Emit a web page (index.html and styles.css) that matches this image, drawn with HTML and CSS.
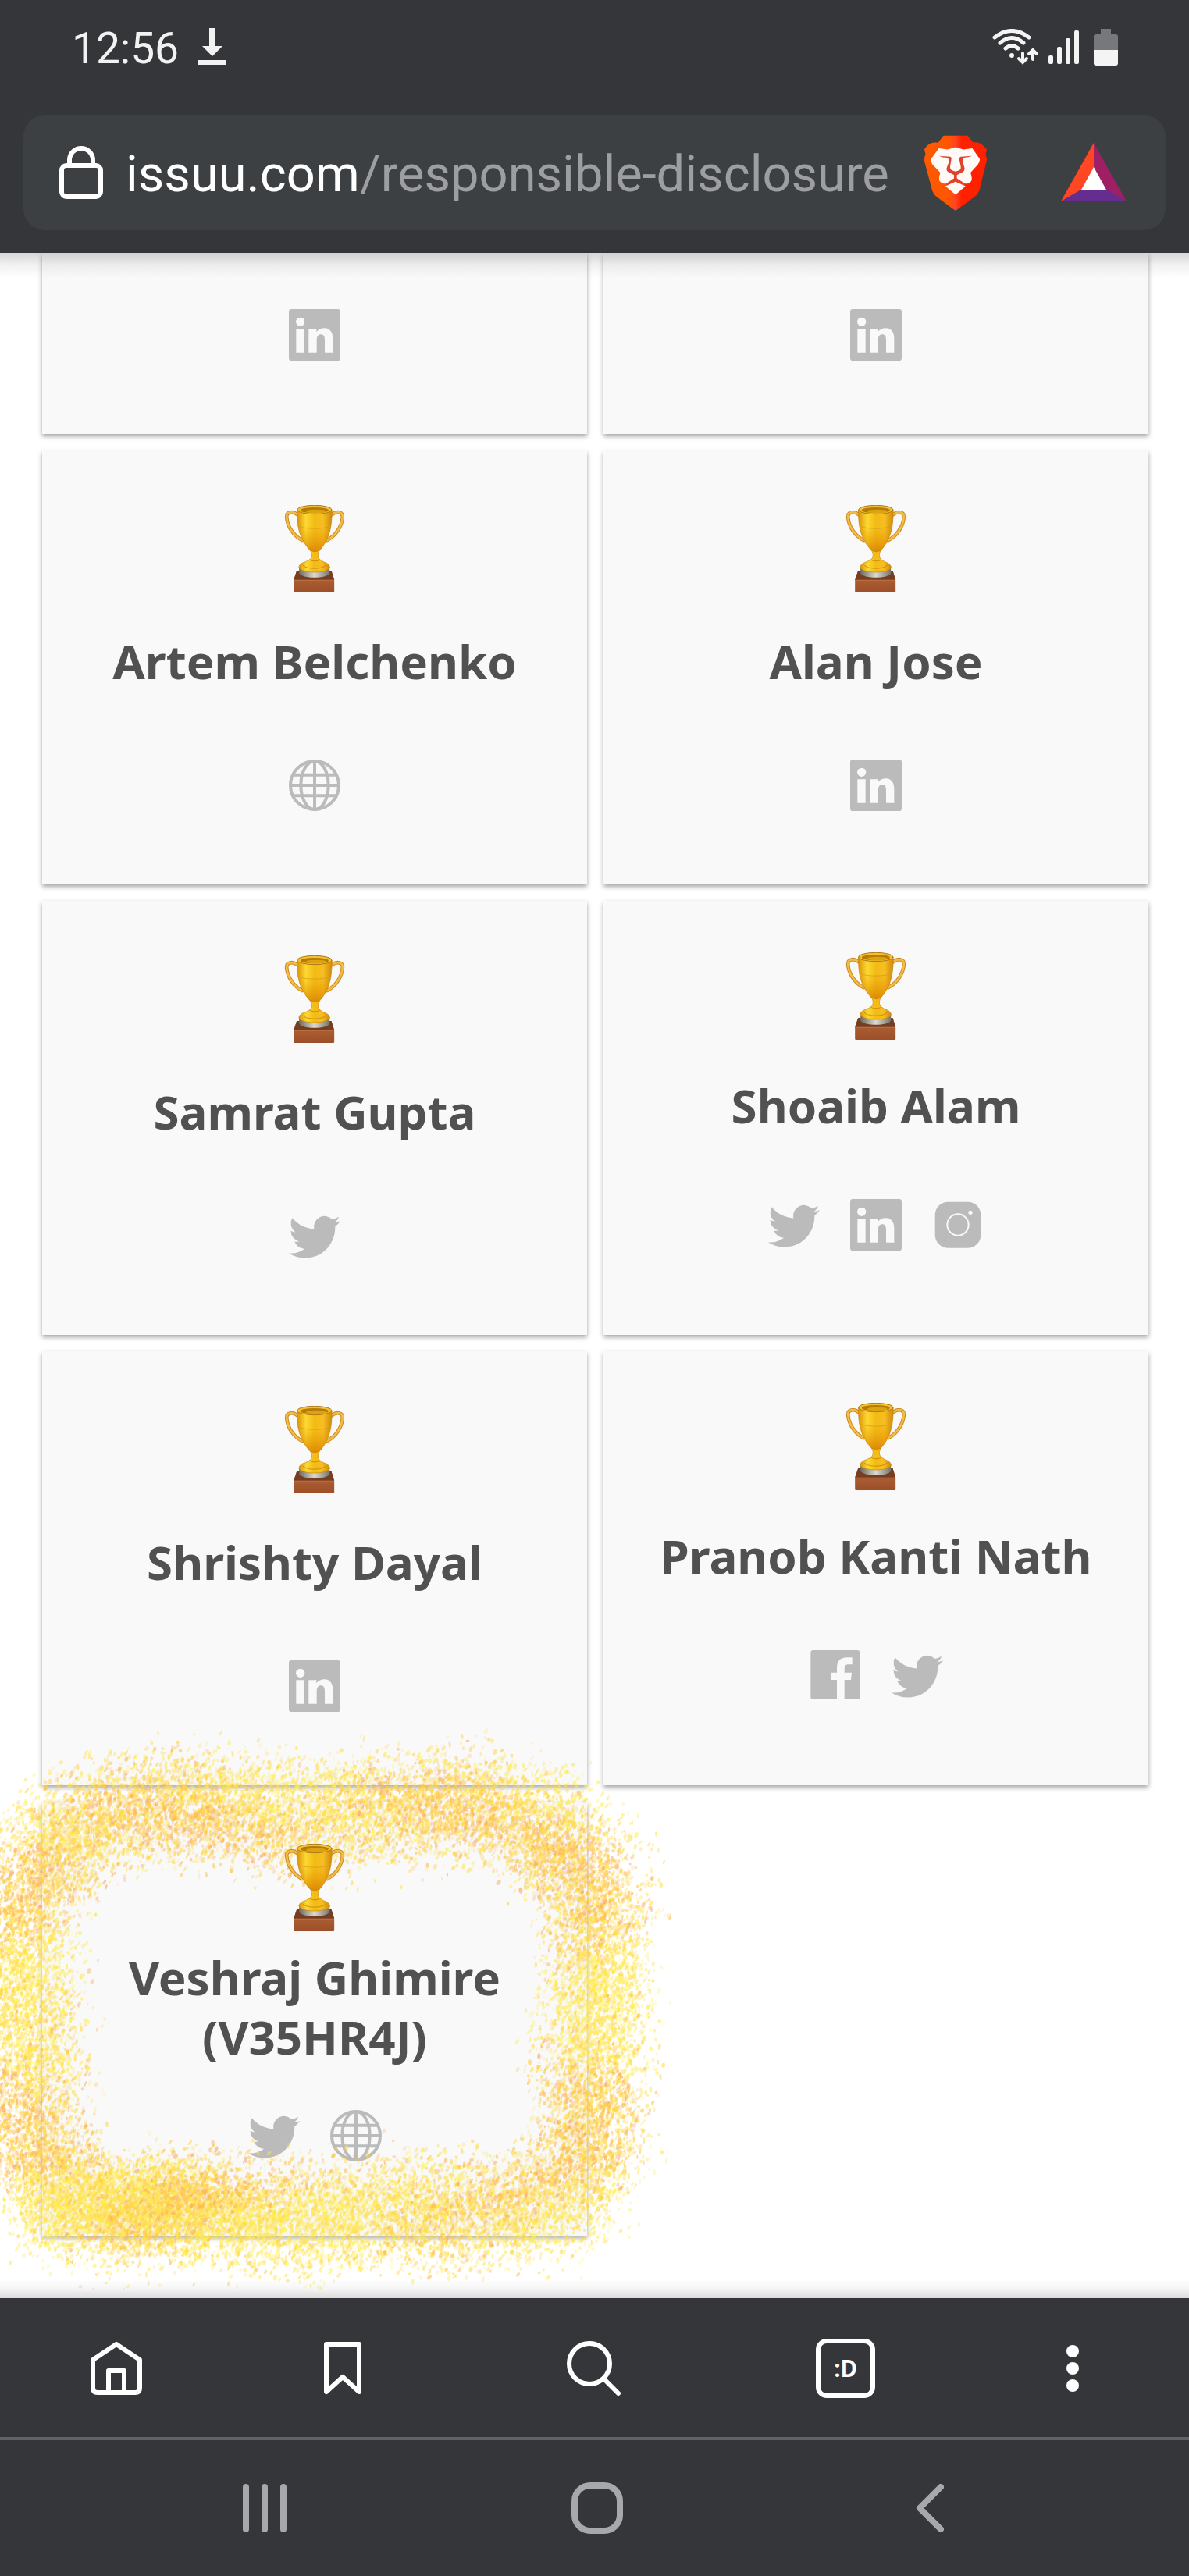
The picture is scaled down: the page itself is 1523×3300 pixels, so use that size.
FILE: index.html
```html
<!DOCTYPE html>
<html lang="en">
<head>
<meta charset="utf-8">
<meta name="viewport" content="width=device-width, initial-scale=1">
<title>issuu.com/responsible-disclosure</title>
<link rel="stylesheet" href="styles.css">
</head>
<body>
<svg class="sprite" aria-hidden="true">
  <defs>
    <linearGradient id="gold" x1="0" x2="1" y1="0" y2="0">
      <stop offset="0" stop-color="#dc9206"/><stop offset=".25" stop-color="#fbd932"/><stop offset=".5" stop-color="#f3bb14"/><stop offset=".75" stop-color="#f6be22"/><stop offset="1" stop-color="#d08a08"/>
    </linearGradient>
    <linearGradient id="cupShade" x1="0" x2="0" y1="0" y2="1">
      <stop offset=".4" stop-color="#e89400" stop-opacity="0"/><stop offset="1" stop-color="#d67c00" stop-opacity=".8"/>
    </linearGradient>
    <linearGradient id="wood" x1="0" x2="0" y1="0" y2="1">
      <stop offset="0" stop-color="#b5683a"/><stop offset="1" stop-color="#9c4f28"/>
    </linearGradient>
    <linearGradient id="silver" x1="0" x2="1" y1="0" y2="0">
      <stop offset="0" stop-color="#6d6a60"/><stop offset=".5" stop-color="#dcdad0"/><stop offset="1" stop-color="#77756c"/>
    </linearGradient>
    <linearGradient id="lion" x1="0" x2="1" y1="0" y2="0">
      <stop offset="0" stop-color="#ff5a00"/><stop offset=".4" stop-color="#ff5500"/><stop offset=".5" stop-color="#ff4424"/><stop offset=".6" stop-color="#ff2100"/><stop offset="1" stop-color="#ff2000"/>
    </linearGradient>
  </defs>
  <symbol id="trophy" viewBox="105 108 231 336">
    <g fill="none" stroke-linecap="round">
      <path d="M154 144C134 130 112 134 113 154C116 192 140 226 172 243M287 144C307 130 329 134 328 154C325 192 301 226 269 243" stroke="#c9871c" stroke-width="14"/>
      <path d="M154 144C134 130 112 134 113 154C116 192 140 226 172 243M287 144C307 130 329 134 328 154C325 192 301 226 269 243" stroke="#f3bc46" stroke-width="8"/>
    </g>
    <path d="M152 360H285L296 395V441Q296 444 291 444H145Q140 444 140 441V395Z" fill="url(#wood)"/>
    <path d="M152 360H285L296 395H140Z" fill="#753e23"/>
    <path d="M141 397H295" stroke="#bd7040" stroke-width="3"/>
    <path d="M161 350V370C170 392 270 392 278 370V350Z" fill="url(#silver)"/>
    <path d="M160 348C161 334 176 328 186 326L204 316C212 304 210 294 204 283H239C233 294 231 304 239 316L254 326C268 330 278 337 279 348C270 372 170 372 160 348Z" fill="url(#gold)" stroke="#c4820e" stroke-width="2"/>
    <path d="M174 338C186 356 252 356 265 338M201 318C210 325 232 325 241 318" fill="none" stroke="#b87406" stroke-width="2"/>
    <path d="M153 126C153 190 160 236 204 283Q221 292 239 283C280 236 287 190 287 126Z" fill="url(#gold)"/>
    <path d="M153 126C153 190 160 236 204 283Q221 292 239 283C280 236 287 190 287 126Z" fill="url(#cupShade)" stroke="#c4820e" stroke-width="2"/>
    <path d="M156 188C180 202 260 202 283 188" fill="none" stroke="#d4961a" stroke-width="2"/>
    <ellipse cx="220" cy="126" rx="66" ry="17" fill="#f2c230" stroke="#b07818" stroke-width="3"/>
    <ellipse cx="220" cy="128" rx="54" ry="11" fill="#b87a06"/>
    <ellipse cx="226" cy="132" rx="38" ry="7" fill="#dba312"/>
  </symbol>
  <symbol id="linkedin" viewBox="387 111 198 198">
    <path fill-rule="evenodd" d="M397 111H575Q585 111 585 121V299Q585 309 575 309H397Q387 309 387 299V121Q387 111 397 111ZM431 143A17 17 0 1 0 431 177A17 17 0 1 0 431 143ZM415 187V278H446V187ZM463 187V278H494V230C494 216 500 208 510 208C521 208 525 216 525 230V278H556V224C556 198 543 184 524 184C511 184 501 189 493 199V187Z"/>
  </symbol>
  <symbol id="facebook" viewBox="105 103 198 198">
    <path d="M119 106H288Q298 106 298 116V285Q298 295 288 295H239V220H264L267 192H239V178C239 166 244 161 255 161H269V134H249C222 134 210 149 210 174V192H186V220H210V295H119Q109 295 109 285V116Q109 106 119 106Z"/>
  </symbol>
  <symbol id="instagram" viewBox="700 111 198 198">
    <rect x="711" y="122" width="176" height="177" rx="50"/>
    <circle cx="799" cy="210" r="41" class="cutline"/>
    <circle cx="847" cy="163" r="8" class="cut"/>
  </symbol>
  <symbol id="twitter" viewBox="0 -0.6 24 24">
    <path d="M23.953 4.57a10 10 0 01-2.825.775 4.958 4.958 0 002.163-2.723c-.951.555-2.005.959-3.127 1.184a4.92 4.92 0 00-8.384 4.482C7.69 8.095 4.067 6.13 1.64 3.162a4.822 4.822 0 00-.666 2.475c0 1.71.87 3.213 2.188 4.096a4.904 4.904 0 01-2.228-.616v.06a4.923 4.923 0 003.946 4.827 4.996 4.996 0 01-2.212.085 4.936 4.936 0 004.604 3.417 9.867 9.867 0 01-6.102 2.105c-.39 0-.779-.023-1.17-.067a13.995 13.995 0 007.557 2.209c9.053 0 13.998-7.496 13.998-13.985 0-.21 0-.42-.015-.63A9.935 9.935 0 0024 4.59z"/>
  </symbol>
  <symbol id="globe" viewBox="153 103 198 198">
    <g fill="none" stroke="currentColor" stroke-width="12">
      <circle cx="252" cy="202" r="93"/><ellipse cx="252" cy="202" rx="53" ry="93"/>
      <path d="M252 109V295M159 202H345M168 162H336M168 242H336"/>
    </g>
  </symbol>
</svg>

<header class="top">
  <div class="status">
    <time class="clock">12:56</time>
    <svg class="download" width="36" height="48" viewBox="0 0 36 48" fill="#f2f2f2" role="img" aria-label="Download"><path d="M14 0h8v23h9L18 36 5 23h9zM0 41h35v6H0z"/></svg>
    <div class="signals">
      <svg width="60" height="46" viewBox="0 0 60 46" fill="none" stroke="#f4f4f4" stroke-width="5" stroke-linecap="round" role="img" aria-label="Wi-Fi"><path d="M3 11Q25-6 47 11M10 18Q25 5 40 18M17 25Q25 18 33 25"/><circle cx="25" cy="34" r="3" fill="#f4f4f4" stroke="none"/><path stroke-width="4" d="M39 31V42M34 38l5 5 5-5M52 39V28M47 32l5-5 5 5"/></svg>
      <svg width="39" height="43" viewBox="0 0 39 43" fill="#f4f4f4" role="img" aria-label="Signal"><rect y="32" width="6" height="11" rx="2"/><rect x="11" y="21" width="6" height="22" rx="2"/><rect x="22" y="10" width="6" height="33" rx="2"/><rect x="33" width="6" height="43" rx="2"/></svg>
      <svg width="31" height="47" viewBox="0 0 31 47" role="img" aria-label="Battery"><path d="M9 0h13v7h6q3 0 3 3v17H0V10q0-3 3-3h6z" fill="#77787c"/><path d="M0 27h31v17q0 3-3 3H3q-3 0-3-3z" fill="#f4f4f4"/></svg>
    </div>
  </div>
  <div class="omnibox">
    <svg class="lock" width="56" height="68" viewBox="0 0 56 68" fill="none" stroke="#fff" stroke-width="6" role="img" aria-label="Secure"><rect x="3" y="25" width="50" height="40" rx="6"/><path d="M13 25V18a15 15 0 0 1 30 0v7"/></svg>
    <button class="url" type="button">issuu.com<span class="path">/responsible-disclosure</span></button>
    <button class="tool" type="button" aria-label="Brave Shields">
      <svg width="82" height="97" viewBox="130 518 244 290"><path d="M206 520H298L320 547C338 543 354 551 372 574L367 590L372 612L343 730Q337 745 324 755L252 808L180 755Q168 747 163 732L131 612L137 590L132 574C146 551 164 543 184 548Z" fill="url(#lion)"/><path d="M188 569L222 573L252 564L282 573L316 569L345 610Q345 620 338 630L309 662Q318 685 311 696Q301 707 285 703L252 681L218 703Q202 707 192 696Q185 685 194 662L163 630Q156 620 158 610Z" fill="#fffaf8"/><path d="M188 598L232 601Q237 603 236 610L231 640Q231 651 240 654L252 658L264 654Q273 651 272 640L266 610Q266 603 272 601L316 598Q300 604 284 605L279 616L287 647Q286 655 280 659L257 671V684L287 703Q290 706 287 712L252 697L217 712Q214 706 217 703L246 684V671L224 659Q217 655 217 647L228 617L222 605Q202 605 188 598Z" fill="#e0432a"/><path d="M213 714L252 697L290 714L252 747Z" fill="#fffaf8"/></svg>
    </button>
    <button class="tool" type="button" aria-label="Brave Rewards">
      <svg width="84" height="76" viewBox="0 0 84 76"><path d="M42 0 0 75 26 60 42 31z" fill="#ff4724"/><path d="M42 0v31l16 29 26 15z" fill="#9e1f63"/><path d="M0 75h84L58 60H26z" fill="#662d91"/><path d="M42 31 26 60h32z" fill="#fff"/></svg>
    </button>
  </div>
</header>

<main class="page">
  <ul class="hall">
    <li class="card card-cut"><div class="links"><a href="#" aria-label="LinkedIn"><svg><use href="#linkedin"/></svg></a></div></li>
    <li class="card card-cut"><div class="links"><a href="#" aria-label="LinkedIn"><svg><use href="#linkedin"/></svg></a></div></li>
    <li class="card"><svg class="trophy"><use href="#trophy"/></svg><h2>Artem Belchenko</h2><div class="links"><a href="#" aria-label="Website"><svg><use href="#globe"/></svg></a></div></li>
    <li class="card"><svg class="trophy"><use href="#trophy"/></svg><h2>Alan Jose</h2><div class="links"><a href="#" aria-label="LinkedIn"><svg><use href="#linkedin"/></svg></a></div></li>
    <li class="card"><svg class="trophy"><use href="#trophy"/></svg><h2>Samrat Gupta</h2><div class="links"><a href="#" aria-label="Twitter"><svg><use href="#twitter"/></svg></a></div></li>
    <li class="card card-multi"><svg class="trophy"><use href="#trophy"/></svg><h2>Shoaib Alam</h2><div class="links"><a href="#" aria-label="Twitter"><svg><use href="#twitter"/></svg></a><a href="#" aria-label="LinkedIn"><svg><use href="#linkedin"/></svg></a><a href="#" aria-label="Instagram"><svg><use href="#instagram"/></svg></a></div></li>
    <li class="card"><svg class="trophy"><use href="#trophy"/></svg><h2>Shrishty Dayal</h2><div class="links"><a href="#" aria-label="LinkedIn"><svg><use href="#linkedin"/></svg></a></div></li>
    <li class="card card-multi"><svg class="trophy"><use href="#trophy"/></svg><h2>Pranob Kanti Nath</h2><div class="links"><a href="#" aria-label="Facebook"><svg><use href="#facebook"/></svg></a><a href="#" aria-label="Twitter"><svg><use href="#twitter"/></svg></a></div></li>
    <li class="card card-long"><canvas class="spray" width="920" height="720" aria-hidden="true"></canvas><svg class="trophy"><use href="#trophy"/></svg><h2>Veshraj Ghimire (V35HR4J)</h2><div class="links"><a href="#" aria-label="Twitter"><svg><use href="#twitter"/></svg></a><a href="#" aria-label="Website"><svg><use href="#globe"/></svg></a></div></li>
  </ul>
</main>

<footer class="bottom">
  <nav class="toolbar" aria-label="Browser">
    <button type="button" aria-label="Home"><svg width="68" height="68" viewBox="0 0 68 68"><path d="M34 3 64 23V59q0 6-6 6H10q-6 0-6-6V23zM24 65V37H44V65"/></svg></button>
    <button type="button" aria-label="Bookmarks"><svg width="48" height="68" viewBox="0 0 48 68"><path d="M3 3H45V64L24 45 3 64z"/></svg></button>
    <button type="button" aria-label="Search"><svg width="70" height="70" viewBox="0 0 70 70"><circle cx="29" cy="29" r="26"/><path d="M47 48 66 67"/></svg></button>
    <button type="button" class="tabs" aria-label="Tabs"><span>:D</span></button>
    <button type="button" aria-label="Menu"><svg class="dots" width="16" height="60" viewBox="0 0 16 60"><circle cx="8" cy="8" r="8"/><circle cx="8" cy="30" r="8"/><circle cx="8" cy="52" r="8"/></svg></button>
  </nav>
  <nav class="system" aria-label="System">
    <button type="button" aria-label="Recents"><svg width="58" height="62" viewBox="0 0 58 62"><path d="M5 4V58M29 4V58M53 4V58"/></svg></button>
    <button type="button" aria-label="Home screen"><svg width="66" height="66" viewBox="0 0 66 66"><rect x="4" y="4" width="58" height="58" rx="20"/></svg></button>
    <button type="button" aria-label="Back"><svg width="36" height="62" viewBox="0 0 36 62"><path d="M32 4 5 31 32 58"/></svg></button>
  </nav>
</footer>
<script src="spray.js"></script>
</body>
</html>
```
FILE: styles.css
```css
* { box-sizing: border-box; }
body {
  margin: 0;
  min-height: 100vh;
  display: flex;
  flex-direction: column;
  background: #fff;
  font-family: Roboto, "Liberation Sans", sans-serif;
}
button { padding: 0; border: 0; background: none; color: inherit; font: inherit; }
svg { display: block; }
.sprite { position: absolute; width: 0; height: 0; }

/* status bar and address bar */
.top { padding: 0 30px 29px; background: #35363a; }
.status { display: flex; align-items: center; height: 120px; margin-bottom: 27px; padding: 0 61px 0 62px; }
.clock { padding-top: 4px; color: #f2f2f2; font-size: 55px; line-height: 64px; }
.download { margin-left: 25px; }
.signals { display: flex; align-items: center; gap: 12px; margin-left: auto; }
.signals svg:last-child { margin-left: 7px; }
.omnibox { display: flex; align-items: center; height: 148px; padding: 0 50px 0 46px; border-radius: 28px; background: #3c4043; }
.lock { flex: none; }
.url { flex: 1; margin-left: 29px; padding-top: 4px; color: #fff; font-size: 65px; line-height: 76px; text-align: left; white-space: nowrap; }
.path { color: #9d9ea1; }
.tool { flex: none; margin-left: 94px; }
.url + .tool { margin-left: 0; }

/* hall of fame */
.page { position: relative; flex: 1; overflow: hidden; padding: 0 52px 79px 54px; }
.page::before, .page::after { content: ""; position: absolute; left: 0; right: 0; z-index: 3; pointer-events: none; }
.page::before { top: 0; height: 32px; background: linear-gradient(rgba(0,0,0,.16), rgba(0,0,0,.05) 50%, transparent); }
.page::after { bottom: 0; height: 24px; background: linear-gradient(transparent, rgba(0,0,0,.04) 50%, rgba(0,0,0,.14)); }
.hall { display: grid; grid-template-columns: 1fr 1fr; gap: 21px; margin: 0; padding: 0; list-style: none; }
.card {
  display: flex;
  flex-direction: column;
  align-items: center;
  min-height: 556px;
  padding: 70px 60px 0;
  background: #f9f9f9;
  box-shadow: 0 3px 6px rgba(0,0,0,.36);
}
.card h2 { margin: 50px 0 88px; color: #515151; font: bold 60px/76px "Noto Sans", "Open Sans", sans-serif; text-align: center; }
.card-cut { min-height: 232px; padding-top: 72px; }
.card-multi { padding-top: 66px; }
.card-multi h2 { margin: 46px 0 82px; }
.card-long { position: relative; padding-top: 54px; }
.card-long h2 { margin: 21px 0 56px; }
.trophy { position: relative; z-index: 2; flex: none; width: 78px; height: 112px; }
.links { display: flex; gap: 39px; color: #bbb; }
.links a { color: inherit; }
.links svg { width: 66px; height: 66px; fill: currentColor; }
.cut { fill: #f9f9f9; }
.cutline { fill: none; stroke: #f9f9f9; stroke-width: 6; }
.spray { position: absolute; z-index: 1; left: -54px; top: -95px; pointer-events: none; }

/* browser toolbar and system navigation */
.bottom { background: #35363a; }
.bottom button { display: flex; align-items: center; justify-content: center; }
.toolbar { display: grid; grid-template-columns: 298fr 282fr 362fr 282fr 299fr; height: 182px; padding-top: 2px; border-bottom: 4px solid #5f6267; }
.toolbar svg { fill: none; stroke: #fff; stroke-width: 6; stroke-linejoin: round; stroke-linecap: round; }
.toolbar .dots { fill: #fff; stroke: none; }
.tabs span { width: 76px; height: 76px; border: 6px solid #fff; border-radius: 14px; color: #fff; font-size: 32px; font-weight: bold; line-height: 64px; }
.system { display: grid; grid-template-columns: repeat(3, 1fr); height: 174px; padding: 0 119px 0 126px; }
.system svg { fill: none; stroke: #a8a8aa; stroke-width: 8; stroke-linecap: round; stroke-linejoin: round; }
```
FILE: spray.js
```js
// Glitter spray: flecks scattered around a rounded-rectangle path.
const canvas = document.querySelector('.spray');
const ctx = canvas.getContext('2d');
let seed = 7;
const rand = () => {
  seed = (seed * 1664525 + 1013904223) % 4294967296;
  return seed / 4294967296;
};
const gauss = () => (rand() + rand() + rand() - 1.5) / 0.5;
const colors = ['#fff04a', '#ffe64a', '#ffd94a', '#ffc93a', '#ffbb44', '#f9a766', '#ffe14a'];
const box = { x: 34, y: 106, w: 728, h: 518, r: 110 };
const pointAt = (t) => {
  const sx = box.w - 2 * box.r, sy = box.h - 2 * box.r, arc = Math.PI * box.r / 2;
  let d = t * (2 * sx + 2 * sy + 4 * arc);
  const sides = [
    [sx, box.x + box.r, box.y, 1, 0], [sy, box.x + box.w, box.y + box.r, 0, 1],
    [sx, box.x + box.w - box.r, box.y + box.h, -1, 0], [sy, box.x, box.y + box.h - box.r, 0, -1]
  ];
  for (const [len, x, y, dx, dy] of sides) {
    if (d < len) return [x + dx * d, y + dy * d, dy, -dx];
    d -= len;
    if (d < arc) {
      const a = d / box.r, ex = x + dx * len, ey = y + dy * len;
      const cx = ex - dy * box.r, cy = ey + dx * box.r;
      const nx = dy * Math.cos(a) + dx * Math.sin(a), ny = -dx * Math.cos(a) + dy * Math.sin(a);
      return [cx + nx * box.r, cy + ny * box.r, nx, ny];
    }
    d -= arc;
  }
  return [box.x + box.r, box.y, 0, -1];
};
const fleck = (px, py) => {
  const tone = Math.sin(px / 61 + Math.sin(py / 47) * 2) + Math.cos(py / 53) + gauss();
  ctx.fillStyle = colors[tone > 0 ? Math.floor(rand() * 3) : 2 + Math.floor(rand() * 5)];
  ctx.globalAlpha = 0.15 + rand() * 0.45;
  ctx.beginPath();
  ctx.ellipse(px, py, 1 + rand() * 1.6, 1.6 + rand() * 2.4, rand() - 0.2, 0, Math.PI * 2);
  ctx.fill();
};
for (let i = 0; i < 27000; i++) {
  const t = rand();
  const [x, y, nx, ny] = pointAt(t);
  const off = gauss() * 34 + Math.sin(t * 44) * 5;
  fleck(x + nx * off + gauss() * 6, y + ny * off + gauss() * 6);
}
// The stroke is heavier at the lower left.
for (let i = 0; i < 2500; i++) fleck(190 + gauss() * 70, 610 + gauss() * 28);
```
